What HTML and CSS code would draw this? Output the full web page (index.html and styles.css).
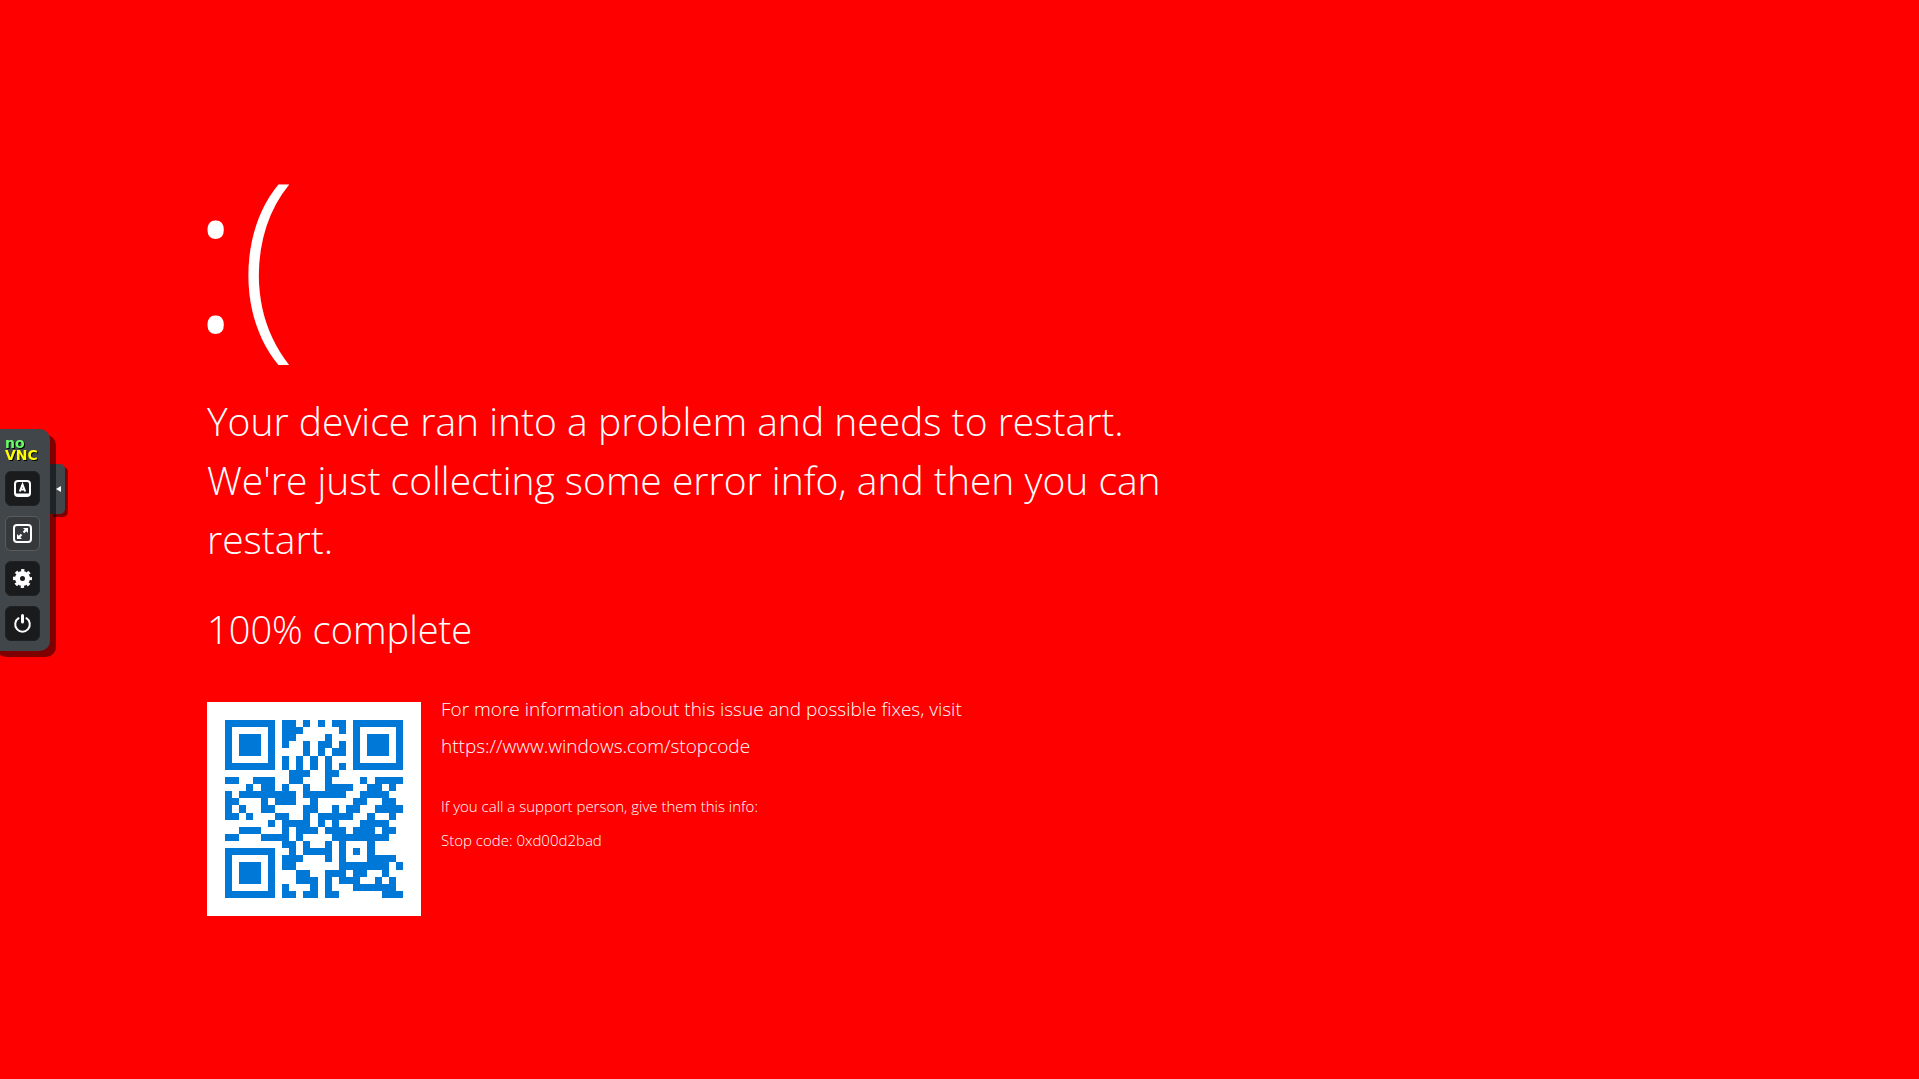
FILE: index.html
```
<!DOCTYPE html>
<html lang="en">
<head>
<meta charset="utf-8">
<meta name="viewport" content="width=device-width, initial-scale=1">
<title>noVNC</title>
<link rel="stylesheet" href="styles.css">
</head>
<body>
<main class="screen">
  <div class="face">:(</div>
  <h1 class="message">Your device ran into a problem and needs to restart. We're just collecting some error info, and then you can restart.</h1>
  <p class="progress">100% complete</p>
  <section class="details">
    <svg class="qr" viewBox="0 0 25 25" role="img" aria-label="QR code" shape-rendering="crispEdges"><path id="modules" fill="#0078d7"/></svg>
    <div class="info">
      <p class="more">For more information about this issue and possible fixes, visit<br><a href="https://www.windows.com/stopcode">https://www.windows.com/stopcode</a></p>
      <p class="support">If you call a support person, give them this info:<br>Stop code: 0xd00d2bad</p>
    </div>
  </section>
</main>
<aside class="dock">
  <div class="bar">
    <div class="logo"><span class="logo-no">no</span><span class="logo-vnc">VNC</span></div>
    <button class="tool" type="button" aria-label="Extra keys">
      <svg viewBox="0 0 25 25"><rect x="5" y="5" width="15" height="15" rx="3" fill="none" stroke="#fff" stroke-width="2"/><path d="M6 17.500h13v2.500H6z" fill="#fff"/><path d="M9.800 15.500L12.500 8.500L15.200 15.500M10.500 13.500h4" fill="none" stroke="#fff" stroke-width="2"/></svg>
    </button>
    <button class="tool tool-plain" type="button" aria-label="Full screen">
      <svg viewBox="0 0 25 25"><rect x="4" y="4" width="17" height="17" rx="3" fill="none" stroke="#fff" stroke-width="2"/><path d="M13 7h5v5l-1.700-1.700-2 2-1.600-1.600 2-2zM7 13l1.700 1.700 2-2 1.600 1.600-2 2L12 18H7z" fill="#fff"/></svg>
    </button>
    <button class="tool" type="button" aria-label="Settings">
      <svg viewBox="0 0 25 25"><circle cx="12.500" cy="12.500" r="5" fill="none" stroke="#fff" stroke-width="5"/><circle cx="12.500" cy="12.500" r="8" fill="none" stroke="#fff" stroke-width="3" stroke-dasharray="3.200 3.083" stroke-dashoffset="1.600"/></svg>
    </button>
    <button class="tool" type="button" aria-label="Disconnect">
      <svg viewBox="0 0 25 25"><path d="M8.600 7.200a7.300 7.300 0 1 0 7.800 0" fill="none" stroke="#fff" stroke-width="2" stroke-linecap="round"/><path d="M12.500 4.500v6.500" stroke="#fff" stroke-width="3" stroke-linecap="round"/></svg>
    </button>
  </div>
  <button class="handle" type="button" aria-label="Hide control bar"><svg viewBox="0 0 5 6"><path d="M5 0v6L0 3z" fill="#fff"/></svg></button>
</aside>
<script src="qr.js"></script>
</body>
</html>
```
FILE: styles.css
```
body {
  margin: 0;
  background: #f00;
  color: #fff;
  font-family: "Open Sans", "Noto Sans", sans-serif;
  font-weight: 300;
}

.screen {
  box-sizing: border-box;
  min-height: 100vh;
  max-width: 1190px;
  padding: 132px 16px 64px 207px;
}

.face {
  margin: 0 0 19px -16px;
  font-size: 206px;
  font-weight: 350;
  line-height: 240px;
}

.message,
.progress {
  margin: 0;
  font-size: 39px;
  font-weight: 300;
  line-height: 59px;
}

.progress {
  margin-top: 32px;
  font-size: 38px;
}

.details {
  display: flex;
  gap: 20px;
  margin-top: 43px;
}

.qr {
  box-sizing: border-box;
  flex: none;
  width: 214px;
  height: 214px;
  padding: 18px;
  background: #fff;
}

.info a {
  color: inherit;
  text-decoration: none;
}

.more,
.support {
  margin: 0;
}

.more {
  margin-top: -11px;
  font-size: 19px;
  line-height: 37px;
}

.support {
  margin-top: 24px;
  font-size: 15px;
  line-height: 34px;
}

.dock {
  position: fixed;
  top: 1px;
  bottom: 0;
  left: 0;
  display: flex;
  align-items: center;
}

.bar {
  position: relative;
  z-index: 1;
  display: flex;
  flex-direction: column;
  gap: 10px;
  margin-left: -10px;
  padding: 8px 10px 10px 15px;
  background: #41464a;
  border-radius: 10px;
  box-shadow: 6px 6px 0 rgba(0, 0, 0, .5);
}

.logo {
  display: flex;
  flex-direction: column;
  width: 35px;
  font: bold 14px/12px "DejaVu Sans", sans-serif;
  text-shadow: 1px 1px 0 #000;
}

.logo-no {
  color: #6f6;
}

.logo-vnc {
  color: #ff0;
}

.tool {
  display: grid;
  place-items: center;
  width: 35px;
  height: 35px;
  padding: 0;
  border: 1px solid #1f2123;
  border-radius: 6px;
  background: #191b1c;
}

.tool-plain {
  border-color: #5c5c5a;
  background: #36393c;
}

.tool svg {
  width: 25px;
  height: 25px;
}

.handle {
  display: flex;
  align-items: center;
  justify-content: flex-end;
  width: 15px;
  height: 50px;
  margin-bottom: 102px;
  padding: 0 4px 0 0;
  border: 0;
  border-radius: 0 5px 5px 0;
  background: #41464a;
  box-shadow: 3px 3px 0 rgba(0, 0, 0, .5);
}

.handle svg {
  width: 5px;
  height: 6px;
}
```
FILE: qr.js
```
// Each row lists the dark runs of the 25-module code as [first, last] columns.
const rows = [
  "0-6 8-9 11 13 15-16 18-24",
  "0 6 8-10 16 18 24",
  "0 2-4 6 8-9 14 18 20-22 24",
  "0 2-4 6 8 11 13-14 16 18 20-22 24",
  "0 2-4 6 11 13 15-16 18 20-22 24",
  "0 6 8 10 12 14 18 24",
  "0-6 8 10 12 14 16 18-24",
  "9-11 14-15",
  "0-1 4-6 9-10 14 19 21-24",
  "3 5-6 8 11 14-17 20-21 23",
  "0 2-9 11-16 19-22",
  "0-1 5 7-9 12 18-19 22-23",
  "0 2 5-6 11-12 15 17-18 21-24",
  "0-1 3 7-8 11 13-17 20 23",
  "6 8-11 13 15 19-22",
  "2-4 8 10-12 14-16 18-20 22-23",
  "0-1 5-8 10 15-22",
  "8-9 11 14 16 20",
  "0-6 9 11-14 16 18 20",
  "0 6 8-10 14 16 20-23",
  "0 2-4 6 8-9 16-22 24",
  "0 2-4 6 10-11 14-16 18-19 22",
  "0 2-4 6 10-12 14 16-18 21 23",
  "0 6 8 12 14 18-23",
  "0-6 8-9 11-12 14-15 22-24"
];
const d = rows.map((row, y) => row.split(" ").map(run => {
  const [a, b = a] = run.split("-").map(Number);
  return `M${a} ${y}h${b - a + 1}v1H${a}z`;
}).join("")).join("");
document.getElementById("modules").setAttribute("d", d);
```
